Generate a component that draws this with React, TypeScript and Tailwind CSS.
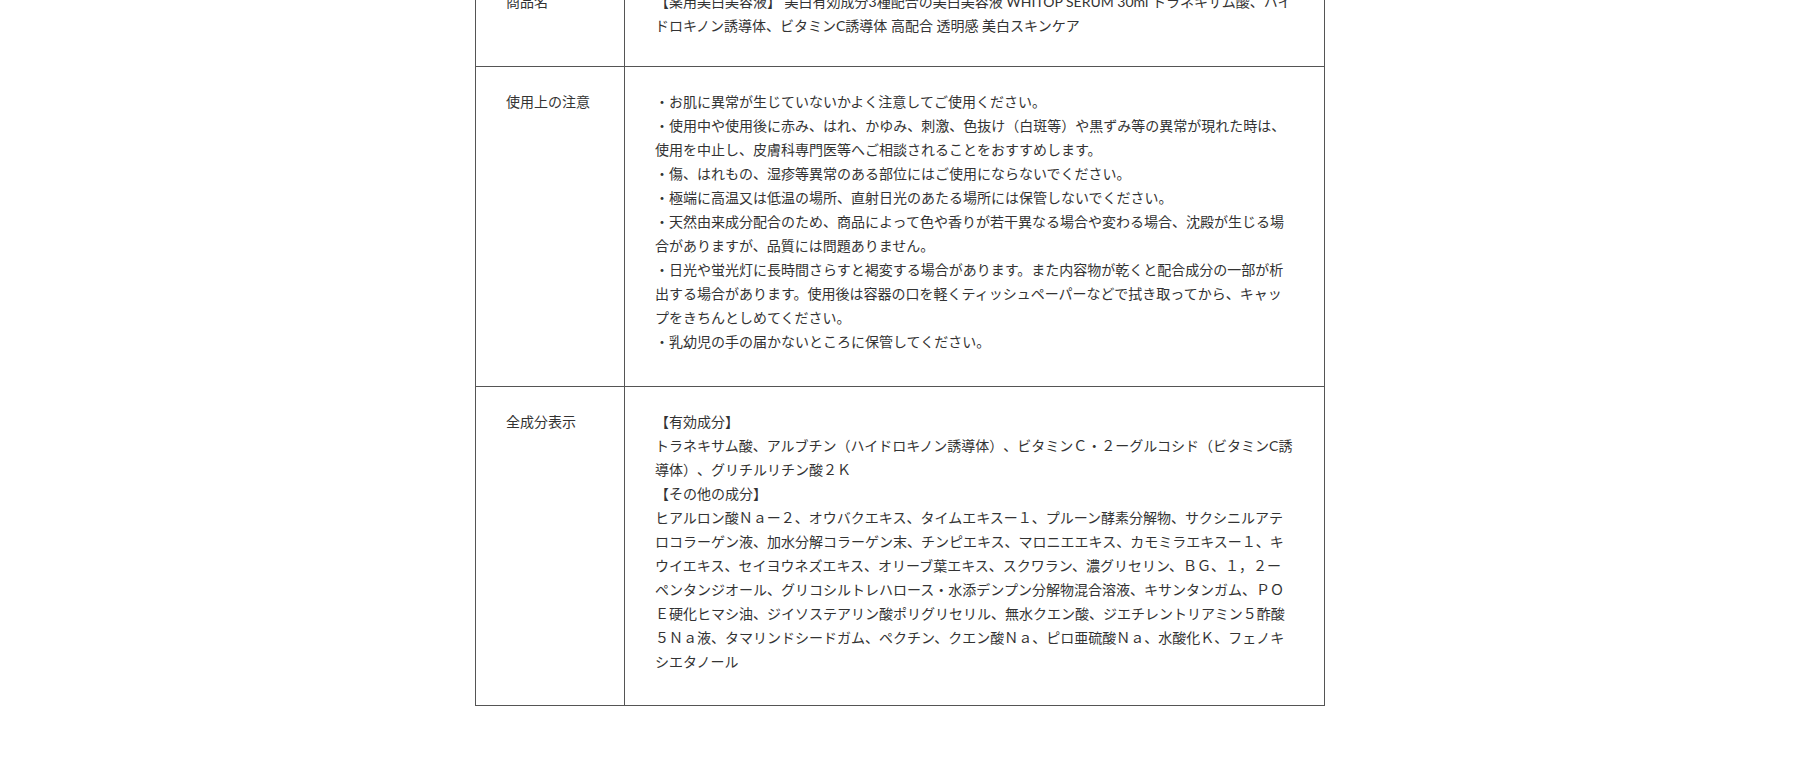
const notes = [
  "・お肌に異常が生じていないかよく注意してご使用ください。",
  "・使用中や使用後に赤み、はれ、かゆみ、刺激、色抜け（白斑等）や黒ずみ等の異常が現れた時は、使用を中止し、皮膚科専門医等へご相談されることをおすすめします。",
  "・傷、はれもの、湿疹等異常のある部位にはご使用にならないでください。",
  "・極端に高温又は低温の場所、直射日光のあたる場所には保管しないでください。",
  "・天然由来成分配合のため、商品によって色や香りが若干異なる場合や変わる場合、沈殿が生じる場合がありますが、品質には問題ありません。",
  "・日光や蛍光灯に長時間さらすと褐変する場合があります。また内容物が乾くと配合成分の一部が析出する場合があります。使用後は容器の口を軽くティッシュペーパーなどで拭き取ってから、キャップをきちんとしめてください。",
  "・乳幼児の手の届かないところに保管してください。",
]

const ingredients = [
  "【有効成分】",
  "トラネキサム酸、アルブチン（ハイドロキノン誘導体）、ビタミンＣ・２ーグルコシド（ビタミンC誘導体）、グリチルリチン酸２Ｋ",
  "【その他の成分】",
  "ヒアルロン酸Ｎａー２、オウバクエキス、タイムエキスー１、プルーン酵素分解物、サクシニルアテロコラーゲン液、加水分解コラーゲン末、チンピエキス、マロニエエキス、カモミラエキスー１、キウイエキス、セイヨウネズエキス、オリーブ葉エキス、スクワラン、濃グリセリン、ＢＧ、１，２ーペンタンジオール、グリコシルトレハロース・水添デンプン分解物混合溶液、キサンタンガム、ＰＯＥ硬化ヒマシ油、ジイソステアリン酸ポリグリセリル、無水クエン酸、ジエチレントリアミン５酢酸５Ｎａ液、タマリンドシードガム、ペクチン、クエン酸Ｎａ、ピロ亜硫酸Ｎａ、水酸化Ｋ、フェノキシエタノール",
]

function Lines({ items }: { items: string[] }) {
  return (
    <>
      {items.map((t) => (
        <p key={t}>{t}</p>
      ))}
    </>
  )
}

export default function App() {
  const th = "w-[149px] border border-[#555] px-[30px] pt-[23px] align-top text-left font-normal"
  const td = "border border-[#555] px-[30px] pt-[23px] align-top"
  return (
    <div className="h-[776px] overflow-hidden bg-white">
      <div
        className="mx-auto -mt-[34px] w-[850px] text-[14px] leading-[24px] text-[#333] [text-spacing-trim:space-all]"
        style={{ fontFamily: "Lato, 'Noto Sans CJK JP', sans-serif" }}
      >
        <table className="w-full border-collapse">
          <tbody>
            <tr>
              <th className={`${th} pb-[28px]`}>商品名</th>
              <td className={`${td} pb-[28px]`}>
                【薬用美白美容液】 美白有効成分3種配合の美白美容液 WHITOP SERUM 30ml トラネキサム酸、ハイドロキノン誘導体、ビタミンC誘導体 高配合 透明感 美白スキンケア
              </td>
            </tr>
            <tr>
              <th className={`${th} pb-8`}>使用上の注意</th>
              <td className={`${td} pb-8`}>
                <Lines items={notes} />
              </td>
            </tr>
            <tr>
              <th className={`${th} pb-[31px]`}>全成分表示</th>
              <td className={`${td} pb-[31px]`}>
                <Lines items={ingredients} />
              </td>
            </tr>
          </tbody>
        </table>
      </div>
    </div>
  )
}
